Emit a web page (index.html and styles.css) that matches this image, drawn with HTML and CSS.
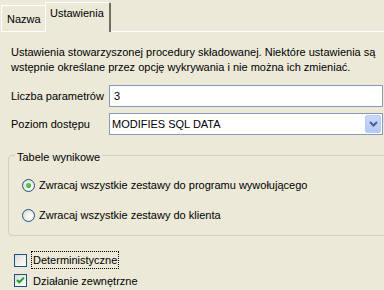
FILE: index.html
```html
<!DOCTYPE html>
<html>
<head>
<meta charset="utf-8">
<link rel="stylesheet" href="styles.css">
</head>
<body>
<div class="page">
  <div class="tabs">
    <div class="tab">Nazwa</div>
    <div class="tab active">Ustawienia</div>
    <div class="tabfill"></div>
  </div>
  <div class="content">
    <p class="desc">Ustawienia stowarzyszonej procedury składowanej. Niektóre ustawienia są<br>wstępnie określane przez opcję wykrywania i nie można ich zmieniać.</p>
    <div class="formrow">
      <span class="label">Liczba parametrów</span>
      <div class="field">3</div>
    </div>
    <div class="formrow second">
      <span class="label">Poziom dostępu</span>
      <div class="field select">
        <span class="seltext">MODIFIES SQL DATA</span>
        <span class="dropbtn">
          <svg width="9" height="6" viewBox="0 0 9 6"><path d="M1 1 L4.5 4.5 L8 1" fill="none" stroke="#4D6185" stroke-width="2"/></svg>
        </span>
      </div>
    </div>
    <div class="group">
      <div class="legend">Tabele wynikowe</div>
      <div class="radios">
        <div class="radiorow"><span class="radio checked"><span class="dot"></span></span><span>Zwracaj wszystkie zestawy do programu wywołującego</span></div>
        <div class="radiorow"><span class="radio"></span><span>Zwracaj wszystkie zestawy do klienta</span></div>
      </div>
    </div>
    <div class="checks">
      <div class="checkrow"><span class="checkbox"></span><span class="cblabel focus">Deterministyczne</span></div>
      <div class="checkrow"><span class="checkbox"><svg width="11" height="11" viewBox="0 0 11 11"><path d="M2 5 L4.3 7.3 L9 2.6" fill="none" stroke="#21A121" stroke-width="2"/></svg></span><span class="cblabel">Działanie zewnętrzne</span></div>
    </div>
  </div>
</div>
</body>
</html>
```
FILE: styles.css
```css
html, body {
  margin: 0;
  padding: 0;
  background: #ECE9D8;
  overflow: hidden;
}
.page {
  width: 384px;
  height: 290px;
  overflow: hidden;
  font-family: "Liberation Sans", Arial, sans-serif;
  font-size: 11px;
  color: #000;
}
.tabs {
  display: flex;
  align-items: flex-end;
  height: 32px;
  padding-left: 1px;
}
.tab {
  box-sizing: border-box;
  height: 27px;
  padding: 7px 5px 0 5px;
  line-height: 13px;
  border-top: 1px solid #fff;
  border-left: 1px solid #fff;
  border-right: 1px solid #ACA899;
  border-bottom: 1px solid #fff;
  border-radius: 2px 2px 0 0;
}
.tab.active {
  height: 30px;
  padding: 4px 5px 0 4px;
  border-bottom: none;
  border-right: 2px solid #716F64;
  width: 66px;
}
.tab:first-child {
  width: 44px;
  border-right: none;
}
.tabfill {
  flex: 1;
  border-bottom: 1px solid #fff;
}
.content {
  padding: 0 0 0 10px;
}
.desc {
  margin: 13px 0 0 1px;
  line-height: 15px;
  white-space: nowrap;
}
.formrow {
  display: flex;
  align-items: center;
  margin-top: 10px;
}
.formrow.second {
  margin-top: 6px;
}
.label {
  width: 98px;
  padding-left: 1px;
}
.field {
  box-sizing: border-box;
  width: 274px;
  height: 22px;
  border: 1px solid #7F9DB9;
  background: #fff;
  padding: 0 4px;
  line-height: 20px;
  display: flex;
  align-items: center;
}
.field.select {
  padding: 1px 1px 1px 2px;
}
.seltext {
  flex: 1;
}
.dropbtn {
  box-sizing: border-box;
  width: 16px;
  height: 18px;
  border: 1px solid #BACCF3;
  border-radius: 2px;
  background: linear-gradient(#C8D9FD, #B4C9F7);
  display: flex;
  align-items: center;
  justify-content: center;
}
.dropbtn svg { display: block; }
.group {
  margin: 20px -20px 0 -2px;
  border: 1px solid #D0D0BF;
  border-radius: 4px;
  padding: 0 0 5px 0;
}
.legend {
  margin: -5px 0 0 6px;
  padding: 0 2px 0 2px;
  background: #ECE9D8;
  width: fit-content;
  line-height: 13px;
}
.radios {
  padding-top: 6px;
}
.radiorow {
  display: flex;
  align-items: center;
  height: 30px;
  padding-left: 13px;
}
.radio {
  box-sizing: border-box;
  width: 13px;
  height: 13px;
  border: 1px solid #1C5180;
  border-radius: 50%;
  background: radial-gradient(circle at 65% 65%, #fff 0%, #F4F3EE 35%, #D6D3C8 100%);
  margin-right: 4px;
  display: flex;
  align-items: center;
  justify-content: center;
}
.dot {
  width: 5px;
  height: 5px;
  border-radius: 50%;
  background: radial-gradient(circle at 40% 40%, #5DD65D, #21A121);
}
.checks {
  margin-top: 14px;
  padding-left: 4px;
}
.checkrow {
  display: flex;
  align-items: center;
  height: 20px;
}
.checkrow + .checkrow {
  height: 21px;
}
.checkbox {
  box-sizing: border-box;
  width: 13px;
  height: 13px;
  border: 1px solid #1C5180;
  background: linear-gradient(135deg, #DCDCD7, #FFFFFF);
  margin-right: 4px;
  display: flex;
  align-items: center;
  justify-content: center;
}
.checkbox svg { display: block; }
.cblabel {
  padding: 1px 1px;
  line-height: 14px;
  border: 1px solid transparent;
}
.cblabel.focus {
  border: 1px dotted #000;
}
```
